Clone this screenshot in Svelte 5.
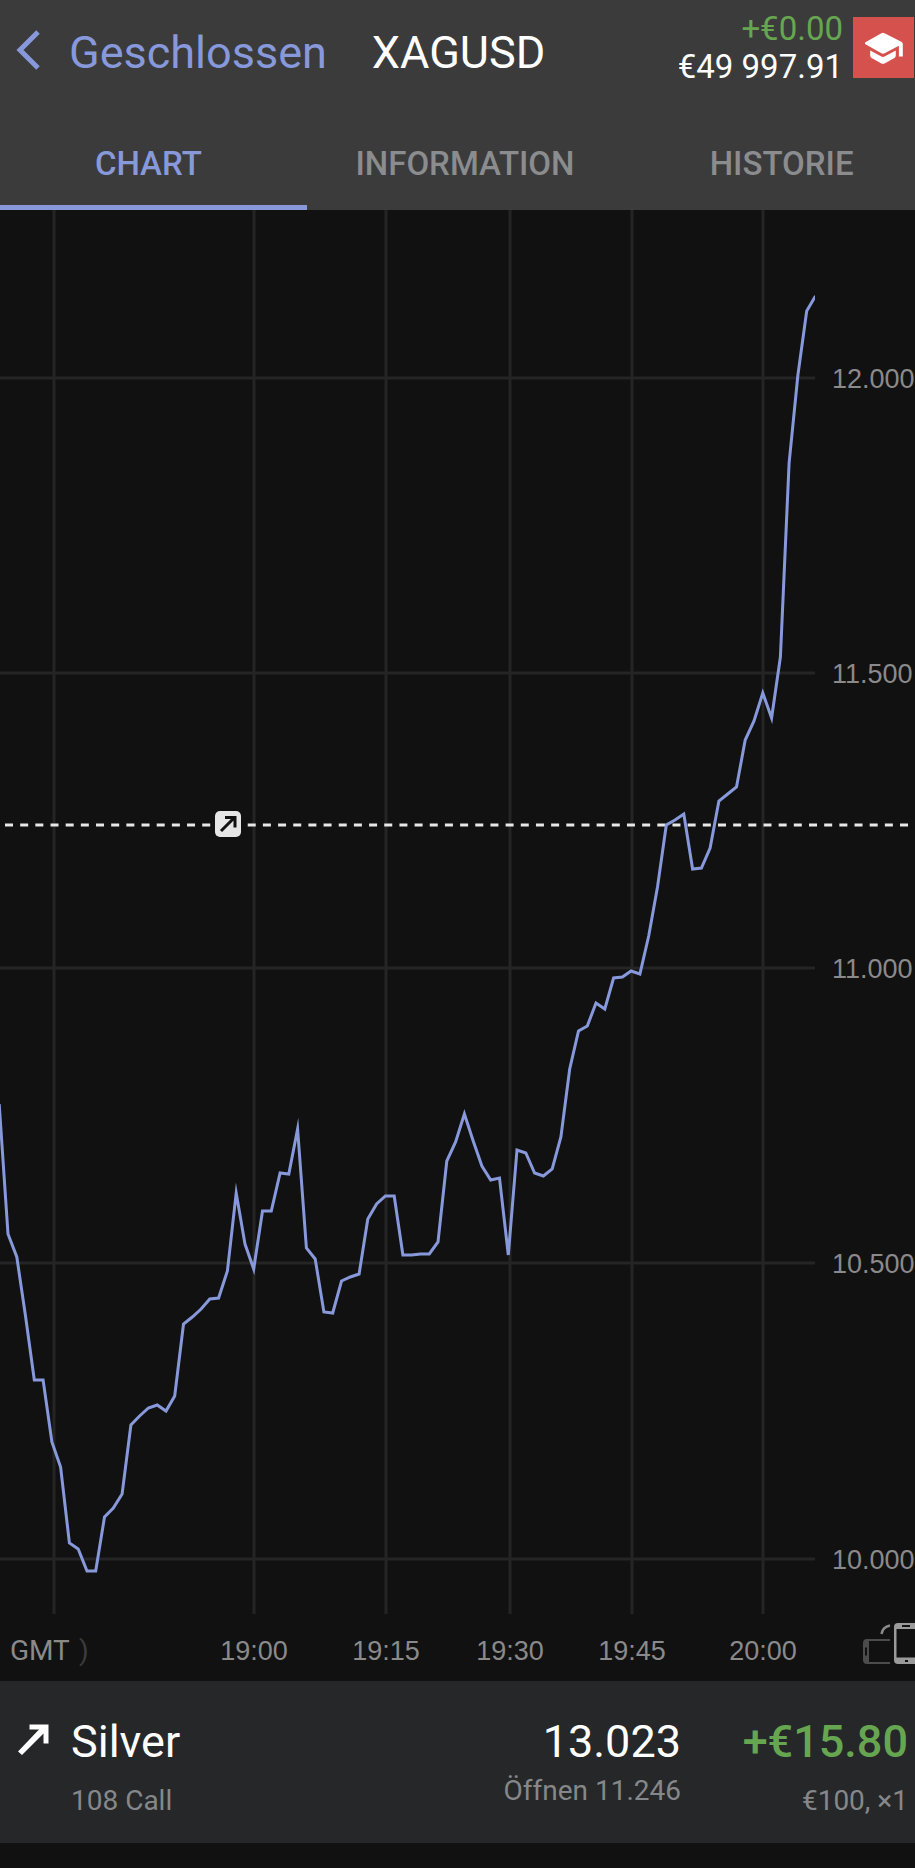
<!-- Closed deal screen: header with tabs, price chart, deal summary -->

<script lang="ts">
	type Tab = { id: string; label: string };

	const tabs: Tab[] = [
		{ id: 'chart', label: 'CHART' },
		{ id: 'information', label: 'INFORMATION' },
		{ id: 'history', label: 'HISTORIE' }
	];

	let activeTab = $state('chart');

	// Horizontal grid lines with their price labels
	const priceLines = [
		{ y: 378, label: '12.000' },
		{ y: 673, label: '11.500' },
		{ y: 968, label: '11.000' },
		{ y: 1263, label: '10.500' },
		{ y: 1559, label: '10.000' }
	];

	// Vertical grid lines, the first one has no label
	const timeLines = [
		{ x: 54, label: '' },
		{ x: 254, label: '19:00' },
		{ x: 386, label: '19:15' },
		{ x: 510, label: '19:30' },
		{ x: 632, label: '19:45' },
		{ x: 763, label: '20:00' }
	];

	// One sample per minute, in chart units from the top
	const samples = [
		1104, 1234, 1257, 1316, 1380, 1380, 1442, 1467, 1543, 1549, 1571, 1571, 1517, 1508, 1494,
		1425, 1416, 1408, 1405, 1411, 1396, 1324, 1317, 1309, 1299, 1298, 1271, 1193, 1244, 1269,
		1211, 1211, 1173, 1174, 1129, 1248, 1259, 1312, 1313, 1281, 1277, 1274, 1219, 1204, 1196,
		1196, 1255, 1255, 1254, 1254, 1242, 1161, 1142, 1114, 1141, 1166, 1180, 1178, 1255, 1150,
		1153, 1173, 1176, 1169, 1137, 1069, 1031, 1026, 1003, 1009, 978, 977, 971, 974, 936, 887,
		825, 820, 814, 869, 868, 848, 801, 794, 787, 740, 721, 693, 718, 657, 463, 375, 311, 296
	];

	const sampleStep = 8.777;
	const points = samples.map((y, i) => `${(i * sampleStep - 0.8).toFixed(1)},${y}`).join(' ');
</script>

<div class="screen">
	<header class="header">
		<div class="top-bar">
			<button class="back" type="button">
				<svg class="back-icon" width="26" height="42" viewBox="0 0 26 42" aria-hidden="true">
					<path d="M22 3 4 21l18 18" />
				</svg>
				<span>Geschlossen</span>
			</button>
			<h1>XAGUSD</h1>
			<div class="account">
				<div class="balance">
					<span class="gain">+€0.00</span>
					<span>€49 997.91</span>
				</div>
				<button class="training" type="button" aria-label="Training">
					<svg width="38" height="32" viewBox="0 0 38 32" aria-hidden="true">
						<path
							d="M0 10.500 16.400 1.200q1.600-.9 3.200 0L36.300 9.800q1.500.8 1.500 2.500v12.200h-3.900V13.800L19.600 21.300q-1.600.9-3.200 0L0 12z"
						/>
						<path d="M5.200 18.400v5.100q0 1.600 1.400 2.400l9.800 5.500q1.600.8 3.200 0l9.800-5.500q1.400-.8 1.400-2.400v-5.100l-11.200 6.200q-1.600.8-3.200 0z" />
					</svg>
				</button>
			</div>
		</div>

		<div class="tabs" role="tablist">
			{#each tabs as tab}
				<button
					type="button"
					role="tab"
					class="tab"
					class:active={activeTab === tab.id}
					aria-selected={activeTab === tab.id}
					onclick={() => (activeTab = tab.id)}
				>
					{tab.label}
				</button>
			{/each}
		</div>
	</header>

	<main class="chart">
		<svg class="plot" viewBox="0 210 915 1471" role="img" aria-label="XAGUSD">
			<defs>
				<clipPath id="plot-area">
					<rect x="0" y="210" width="815" height="1404" />
				</clipPath>
			</defs>

			<g class="grid">
				{#each priceLines as line}
					<line x1="0" x2="815" y1={line.y} y2={line.y} />
				{/each}
				{#each timeLines as line}
					<line x1={line.x} x2={line.x} y1="210" y2="1614" />
				{/each}
			</g>

			<line class="open-level" x1="5" x2="910" y1="825" y2="825" />
			<polyline class="price" {points} clip-path="url(#plot-area)" />

			<!-- Opening marker -->
			<rect class="marker" x="215" y="811" width="26" height="26" rx="5" />
			<path class="marker-arrow" d="M221 831 234 818M225 817.500h10v10" />

			<g class="axis">
				{#each priceLines as line}
					<text x="832" y={line.y + 10}>{line.label}</text>
				{/each}
				{#each timeLines as line}
					<text x={line.x} y="1660" text-anchor="middle">{line.label}</text>
				{/each}
			</g>
			<text class="zone" x="10" y="1660">GMT</text>
			<text class="zone faded" x="79" y="1660">)</text>
		</svg>

		<button class="rotate" type="button" aria-label="Rotate">
			<svg width="54" height="44" viewBox="0 0 54 44" aria-hidden="true">
				<g class="phone-flat">
					<path d="M29 17H7v23h22" />
					<path class="solid" d="M8 16H6q-4 0-4 4v17q0 4 4 4h2zM4 24.500v8h2v-8z" />
				</g>
				<path class="arc" d="M20.500 11q1-7 8.500-8.500" />
				<path
					class="phone"
					d="M37 0h21v41H37q-4 0-4-4V4q0-4 4-4zM35.500 6v28.500H58V6zM41 2v2h8V2zM44 37v2h3v-2z"
				/>
			</svg>
		</button>
	</main>

	<section class="deal">
		<svg class="deal-icon" width="34" height="34" viewBox="0 0 34 34" aria-hidden="true">
			<path d="M13.500 1.500H32.500V20.500H27.500V10.500L6 32 2 28.500 23 6.500H13.500z" />
		</svg>
		<div class="cell">
			<span class="value">Silver</span>
			<span class="note">108 Call</span>
		</div>
		<div class="cell right">
			<span class="value">13.023</span>
			<span class="note near">Öffnen 11.246</span>
		</div>
		<div class="cell right">
			<span class="value profit">+€15.80</span>
			<span class="note">€100, ×1</span>
		</div>
	</section>
</div>

<style>
	:global(body) {
		background: #111;
	}

	.screen {
		min-height: 100vh;
		overflow: hidden;
		background: #111;
		color: #fff;
		font-family: Roboto, sans-serif;
	}

	button {
		margin: 0;
		padding: 0;
		border: 0;
		background: none;
		color: inherit;
		font: inherit;
		cursor: pointer;
	}

	/* Header */
	.header {
		background: #3b3b3c;
	}

	.top-bar {
		display: flex;
		align-items: center;
		height: 104px;
		padding: 0 1px 17px 16px;
	}

	.back {
		display: flex;
		align-items: center;
		gap: 27px;
		color: #8799db;
		font-size: 45px;
	}

	.back-icon {
		margin-bottom: 5px;
		fill: none;
		stroke: #8799db;
		stroke-width: 5;
	}

	h1 {
		margin: 0 0 0 45px;
		font-size: 45px;
		font-weight: 400;
	}

	.account {
		display: flex;
		align-items: center;
		gap: 10px;
		margin: 0 0 9px auto;
	}

	.balance {
		display: flex;
		flex-direction: column;
		align-items: flex-end;
		font-size: 33px;
		line-height: 38px;
	}

	.gain {
		color: #67a651;
	}

	.training {
		display: grid;
		place-items: center;
		width: 61px;
		height: 61px;
		background: #d5514d;
	}

	.training svg {
		fill: #fff;
	}

	/* Tabs are slightly wider than the screen */
	.tabs {
		display: grid;
		grid-template-columns: repeat(3, 1fr);
		margin: 0 -25px 0 -10px;
	}

	.tab {
		height: 89px;
		border-bottom: 5px solid transparent;
		color: #8b8c8e;
		font-size: 33px;
		font-weight: 500;
	}

	.tab.active {
		border-color: #8799db;
		color: #8799db;
	}

	/* Chart */
	.chart {
		position: relative;
	}

	.plot {
		display: block;
		width: 100%;
		height: auto;
	}

	.grid line {
		stroke: #252525;
		stroke-width: 3;
	}

	.open-level {
		stroke: #e8e8e8;
		stroke-width: 3;
		stroke-dasharray: 8 7.17;
	}

	.price {
		fill: none;
		stroke: #8799db;
		stroke-width: 3;
		stroke-miterlimit: 9;
	}

	.marker {
		fill: #e6e6e6;
	}

	.marker-arrow {
		fill: none;
		stroke: #111;
		stroke-width: 3;
	}

	.axis text {
		fill: #8a8a8a;
		font-family: 'Liberation Sans', Arial, sans-serif;
		font-size: 27px;
	}

	.zone {
		fill: #8a8a8a;
		font-size: 28px;
	}

	.faded {
		fill: #3c3c3c;
	}

	.rotate {
		position: absolute;
		right: 0;
		bottom: 14px;
	}

	.rotate svg {
		display: block;
	}

	.phone {
		fill: #9a9a9a;
		fill-rule: evenodd;
	}

	.phone-flat path {
		fill: none;
		stroke: #4c4c4c;
		stroke-width: 2;
	}

	.phone-flat .solid {
		fill: #4c4c4c;
		fill-rule: evenodd;
		stroke: none;
	}

	.arc {
		fill: none;
		stroke: #8a8a8a;
		stroke-width: 2.5;
	}

	/* Deal summary */
	.deal {
		display: grid;
		grid-template-columns: 55px 1fr auto 227px;
		height: 129px;
		padding: 33px 7px 0 16px;
		background: #252729;
	}

	.deal-icon {
		margin-top: 9px;
		fill: #fff;
	}

	.cell {
		display: flex;
		flex-direction: column;
	}

	.right {
		align-items: flex-end;
	}

	.value {
		font-size: 45px;
		line-height: 56px;
	}

	.profit {
		color: #67a651;
		font-weight: 500;
	}

	.note {
		margin-top: 13px;
		color: #85878a;
		font-size: 28px;
		line-height: 36px;
	}

	.near {
		margin-top: 3px;
	}
</style>
